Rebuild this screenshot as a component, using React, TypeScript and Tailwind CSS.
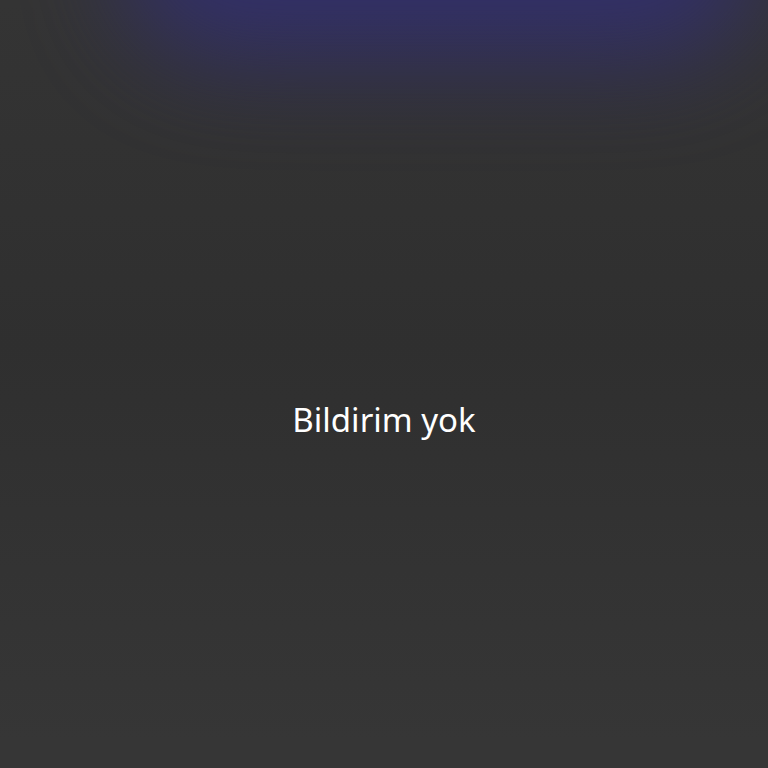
export default function App() {
  return (
    <div className="relative h-[768px] w-[768px] overflow-hidden bg-[#303030]">
      {/* soft glow along the top edge */}
      <div className="pointer-events-none absolute left-[120px] top-[-150px] h-[210px] w-[640px] rounded-full bg-[#2e2b6c] opacity-90 blur-[50px]" />
      <div className="pointer-events-none absolute inset-0 bg-[linear-gradient(180deg,rgba(255,255,255,0.02)_0%,rgba(0,0,0,0.02)_45%,rgba(255,255,255,0.03)_100%)]" />
      <div className="relative flex h-full w-full items-center justify-center pt-[70px]">
        <p className="font-['Noto_Sans',sans-serif] text-[33px] leading-none text-white">Bildirim yok</p>
      </div>
    </div>
  );
}
